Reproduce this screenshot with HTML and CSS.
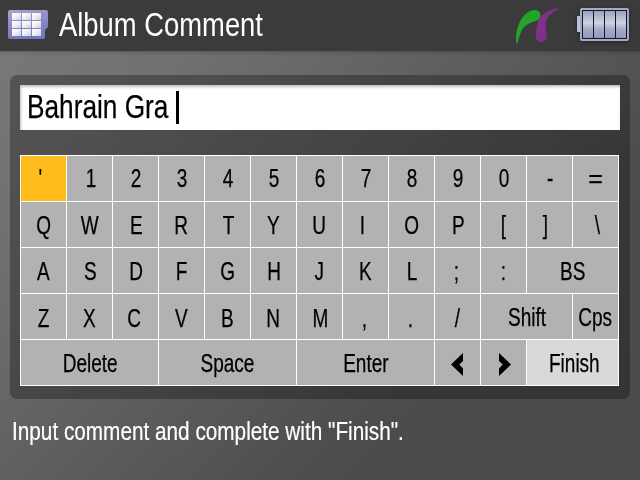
FILE: index.html
```html
<!DOCTYPE html>
<html lang="en">
<head>
<meta charset="utf-8">
<title>Album Comment</title>
<link rel="stylesheet" href="styles.css">
</head>
<body>
<header class="bar">
  <svg class="album" width="42" height="32" viewBox="0 0 42 32">
    <defs>
      <linearGradient id="a" x1="0" y1="0" x2=".3" y2="1"><stop offset="0" stop-color="#a9a3cf"/><stop offset="1" stop-color="#7377bd"/></linearGradient>
      <linearGradient id="p" x1="0" y1="0" x2="1" y2="1"><stop offset="0" stop-color="#fff"/><stop offset=".4" stop-color="#f4f4f6"/><stop offset="1" stop-color="#cfcfdb"/></linearGradient>
    </defs>
    <path d="M2 0H38Q40 0 40 2V17L37 20V27Q37 29 35 29H2Q0 29 0 27V2Q0 0 2 0Z" fill="url(#a)"/>
    <g fill="url(#p)">
      <rect x="4" y="3" width="9" height="7"/><rect x="14" y="3" width="9" height="7"/><rect x="24" y="3" width="9" height="7"/>
      <rect x="4" y="11" width="9" height="7"/><rect x="14" y="11" width="9" height="7"/><rect x="24" y="11" width="9" height="7"/>
      <rect x="4" y="19" width="9" height="7"/><rect x="14" y="19" width="9" height="7"/><rect x="24" y="19" width="9" height="7"/>
    </g>
  </svg>
  <h1 class="title">Album Comment</h1>
  <svg class="bridge" width="46" height="38" viewBox="0 0 46 38">
    <path d="M1.400 35.500C-.2 26 3 14 9.500 7C13 3.500 17 1.800 20 2C24 2.300 26 5 25.500 8C25 11 22.500 12.800 18 14C13 15.500 9 18 6.500 23C4.500 27 3.500 31 2.800 35.200Z" fill="#22a528"/>
    <path d="M43 .1C37 .8 29 4.500 25 9.500C22.500 13 21.500 19 20.800 26C20.300 31 22.500 34 26 34C30 34 32 31 31.700 27C31.400 23 30.200 20 30.600 15.500C31 10.500 35 5 43.300 1.200Z" fill="#80308a"/>
  </svg>
  <svg class="battery" width="54" height="38" viewBox="0 0 54 38">
    <defs><linearGradient id="b" x1="0" y1="0" x2="0" y2="1"><stop offset="0" stop-color="#9a9fbd"/><stop offset=".45" stop-color="#ced2e3"/><stop offset=".65" stop-color="#a7abc8"/><stop offset="1" stop-color="#9498bb"/></linearGradient></defs>
    <rect x="2" y="10" width="5" height="16" rx="1" fill="#bcc0d8"/>
    <rect x="5" y="2" width="49" height="33" rx="2" fill="#a6aac9"/>
    <rect x="7.500" y="4.500" width="44" height="28" fill="url(#b)" stroke="#171922"/>
    <path d="M18.500 4V33M29.500 4V33M40.500 4V33" stroke="#171922"/>
  </svg>
</header>
<main class="panel">
  <div class="field"><span class="entry">Bahrain Gra</span><i class="caret"></i></div>
  <div class="keys">
    <div class="key active l2"><span>'</span></div><div class="key r1"><span>1</span></div><div class="key"><span>2</span></div><div class="key"><span>3</span></div><div class="key"><span>4</span></div><div class="key"><span>5</span></div><div class="key"><span>6</span></div><div class="key"><span>7</span></div><div class="key"><span>8</span></div><div class="key"><span>9</span></div><div class="key"><span>0</span></div><div class="key r1"><span>-</span></div><div class="key"><span class="wide">=</span></div>
    <div class="key d1"><span>Q</span></div><div class="key d1"><span>W</span></div><div class="key d1 r1"><span>E</span></div><div class="key d1"><span>R</span></div><div class="key d1 r1"><span>T</span></div><div class="key d1"><span>Y</span></div><div class="key d1"><span>U</span></div><div class="key d1 l2"><span>I</span></div><div class="key d1"><span>O</span></div><div class="key d1 r1"><span>P</span></div><div class="key d1"><span>[</span></div><div class="key d1 l4"><span>]</span></div><div class="key d1 r2"><span>\</span></div>
    <div class="key d1"><span>A</span></div><div class="key d1 r1"><span>S</span></div><div class="key d1 r1"><span>D</span></div><div class="key d1"><span>F</span></div><div class="key d1"><span>G</span></div><div class="key d1 r1"><span>H</span></div><div class="key d1"><span>J</span></div><div class="key d1"><span>K</span></div><div class="key d1"><span>L</span></div><div class="key d1 l1"><span>;</span></div><div class="key d1"><span>:</span></div><div class="key d1 w2"><span>BS</span></div>
    <div class="key d2"><span>Z</span></div><div class="key d2"><span>X</span></div><div class="key d2 l1"><span>C</span></div><div class="key d2"><span>V</span></div><div class="key d2"><span>B</span></div><div class="key d2"><span>N</span></div><div class="key d2 r1"><span>M</span></div><div class="key d2 l1"><span>,</span></div><div class="key d2 l1"><span>.</span></div><div class="key d2"><span>/</span></div><div class="key d1 w2 r1"><span>Shift</span></div><div class="key d1"><span>Cps</span></div>
    <div class="key d1 w3 r1"><span>Delete</span></div><div class="key d1 w3"><span>Space</span></div><div class="key d1 w3"><span>Enter</span></div>
    <div class="key arrow l1"><svg width="12" height="24" viewBox="0 0 12 24"><path d="M12 0V8L8.300 11.500L12 15.500V23L0 11.500Z"/></svg></div>
    <div class="key arrow r1"><svg width="12" height="24" viewBox="0 0 12 24"><path d="M0 0V8L3.700 11.500L0 15.500V23L12 11.500Z"/></svg></div>
    <div class="key d1 w2 finish r2"><span>Finish</span></div>
  </div>
</main>
<footer class="hint"><span>Input comment and complete with "Finish".</span></footer>
</body>
</html>
```
FILE: styles.css
```css
* { box-sizing: border-box; }
body {
  margin: 0;
  width: 640px;
  height: 480px;
  overflow: hidden;
  display: flex;
  flex-direction: column;
  background: linear-gradient(136deg, #7a7a7a 0%, #707070 22%, #585858 55%, #4c4c4c 72%, #4b4b4b 100%);
  font-family: "Liberation Sans", Arial, sans-serif;
  color: #000;
}
.bar {
  height: 51px;
  flex: none;
  display: flex;
  align-items: flex-start;
  background: #3b3b3b;
  box-shadow: 0 1px 4px rgba(0, 0, 0, .25);
}
.album { margin: 10px 0 0 8px; }
.title {
  margin: 6px 0 0 9px;
  width: 246px;
  font-size: 33px;
  line-height: 38px;
  font-weight: 400;
  white-space: nowrap;
  color: #fff;
  transform: scaleX(.83);
  transform-origin: 0 0;
}
.bridge { margin: 8px 0 0 auto; }
.battery { margin: 6px 11px 0 14px; filter: drop-shadow(0 1px 2px #222); }
.panel {
  flex: none;
  margin: 24px 10px 0;
  height: 324px;
  padding: 10px;
  border-radius: 7px;
  background: rgba(0, 0, 0, .29);
}
.field {
  height: 45px;
  display: flex;
  align-items: flex-start;
  padding-left: 7px;
  background: #fff;
  box-shadow: inset 1px 2px 3px rgba(0, 0, 0, .25);
}
.entry {
  width: 149px;
  margin-top: 3px;
  font-size: 33px;
  line-height: 38px;
  white-space: nowrap;
  transform: scaleX(.795);
  transform-origin: 0 0;
  -webkit-text-stroke: .25px;
}
.caret { width: 3px; height: 33px; margin-top: 6px; background: #000; }
.keys {
  width: 599px;
  margin-top: 25px;
  padding: 1px;
  display: grid;
  grid-template-columns: repeat(13, 45px);
  grid-auto-rows: 45px;
  gap: 1px;
  background: #fff;
}
.key {
  display: flex;
  justify-content: center;
  background: #b2b2b2;
  font-size: 25px;
  line-height: 29px;
  padding-top: 8px;
  min-width: 0;
}
.key span { transform: scaleX(.76); white-space: nowrap; -webkit-text-stroke: .25px; }
.key .wide { transform: none; }
.d1 { padding-top: 9px; }
.d2 { padding-top: 10px; }
.r1 { padding-left: 2px; }
.r2 { padding-left: 4px; }
.l1 { padding-right: 2px; }
.l2 { padding-right: 6px; }
.l4 { padding-right: 8px; }
.w2 { grid-column: span 2; }
.w3 { grid-column: span 3; }
.arrow { padding-top: 13px; }
.active { background: #ffbc1c; }
.finish { background: #d9d9d9; }
.hint { margin: 18px 0 0 12px; color: #fff; font-size: 25px; line-height: 29px; white-space: nowrap; }
.hint span { display: inline-block; transform: scaleX(.83); transform-origin: 0 0; -webkit-text-stroke: .2px; }
```
